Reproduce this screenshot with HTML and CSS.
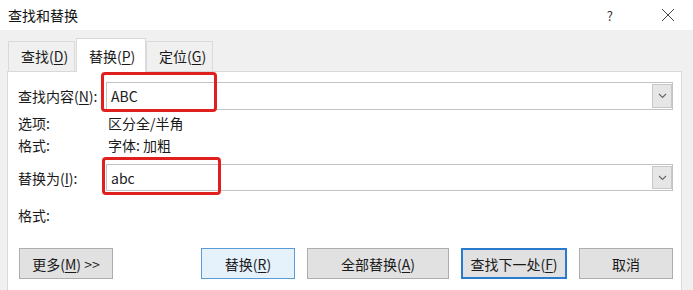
FILE: index.html
```html
<!DOCTYPE html>
<html lang="zh-CN">
<head>
  <meta charset="UTF-8">
  <title>查找和替换</title>
  <link rel="stylesheet" href="styles.css">
</head>
<body>

<div class="dialog">
  <div class="titlebar">
    <span class="title">查找和替换</span>
    <span class="help">?</span>
    <svg class="close" width="14" height="14" viewBox="0 0 14 14">
      <path d="M1 1 L13 13 M13 1 L1 13" stroke="#444" stroke-width="1" fill="none"/>
    </svg>
  </div>

  <div class="body">
    <div class="tabs">
      <div class="tab">查找(<u>D</u>)</div>
      <div class="tab active">替换(<u>P</u>)</div>
      <div class="tab">定位(<u>G</u>)</div>
    </div>

    <div class="panel">
      <div class="field">
        <label>查找内容(<u>N</u>):</label>
        <div class="combo">
          <span class="value">ABC</span>
          <span class="drop"><svg width="9" height="6" viewBox="0 0 9 6"><path d="M1 1 L4.5 4.5 L8 1" stroke="#666" stroke-width="1.1" fill="none"/></svg></span>
          <div class="mark mark-find"></div>
        </div>
      </div>
      <div class="info first"><span class="key">选项:</span><span>区分全/半角</span></div>
      <div class="info"><span class="key">格式:</span><span>字体: 加粗</span></div>

      <div class="field second">
        <label>替换为(<u>I</u>):</label>
        <div class="combo">
          <span class="value">abc</span>
          <span class="drop"><svg width="9" height="6" viewBox="0 0 9 6"><path d="M1 1 L4.5 4.5 L8 1" stroke="#666" stroke-width="1.1" fill="none"/></svg></span>
          <div class="mark mark-replace"></div>
        </div>
      </div>
      <div class="info last"><span class="key">格式:</span><span></span></div>

      <div class="buttons">
        <button class="btn more">更多(<u>M</u>) &gt;&gt;</button>
        <div class="actions">
          <button class="btn primary">替换(<u>R</u>)</button>
          <button class="btn wide">全部替换(<u>A</u>)</button>
          <button class="btn focus">查找下一处(<u>F</u>)</button>
          <button class="btn">取消</button>
        </div>
      </div>
    </div>
  </div>
</div>

</body>
</html>
```

FILE: styles.css
```css
* { box-sizing: border-box; }
body {
  margin: 0;
  width: 693px;
  height: 290px;
  overflow: hidden;
  font-family: "Noto Sans CJK SC", "Noto Sans", sans-serif;
  font-size: 14px;
  color: #1a1a1a;
  background: #f0f0f0;
}
u { text-decoration: underline; text-underline-offset: 2px; }

.titlebar {
  height: 30px;
  background: #fff;
  display: flex;
  align-items: center;
  padding-left: 8px;
  position: relative;
}
.title { font-size: 14px; line-height: 20px; color: #111; }
.help {
  margin-left: auto;
  margin-right: 48px;
  font-size: 13px;
  color: #333;
}
.close { margin-right: 18px; }

.body { padding: 8px 11px 0 7px; }

.tabs {
  display: flex;
  align-items: flex-end;
  padding-left: 1px;
  height: 33px;
}
.tab {
  height: 30px;
  line-height: 29px;
  padding: 0 12px;
  width: 67px;
  text-align: center;
  background: #f0f0f0;
  border: 1px solid #dadada;
  border-bottom: none;
  margin-right: 1px;
  white-space: nowrap;
}
.tab.active {
  height: 34px;
  line-height: 35px;
  width: 70px;
  background: #fff;
  border-color: #d9d9d9;
  margin-bottom: -1px;
  position: relative;
  z-index: 1;
  margin-right: 0;
}

.panel {
  background: #fff;
  border: 1px solid #d9d9d9;
  border-bottom: none;
  height: 230px;
  padding: 10px 8px 0 10px;
}

.field {
  display: flex;
  align-items: center;
  height: 28px;
}
.field.second { margin-top: 8px; height: 27px; }
.field label { width: 88px; line-height: 20px; white-space: nowrap; }
.combo {
  flex: 1;
  height: 100%;
  border: 1px solid #c3c3c3;
  display: flex;
  align-items: center;
  position: relative;
  padding-left: 4px;
}
.value { font-size: 14px; flex: 1; }
.drop {
  width: 20px;
  height: calc(100% - 2px);
  margin-right: 0;
  background: #e6e6e6;
  border: 1px solid #c8c8c8;
  display: flex;
  align-items: center;
  justify-content: center;
}

.mark {
  position: absolute;
  border: 3px solid #e0201f;
  border-radius: 4px;
}
.mark-find { left: -6px; top: -11px; width: 116px; height: 40px; }
.mark-replace { left: -5px; top: -8px; width: 119px; height: 38px; }

.info { display: flex; height: 22px; line-height: 22px; }
.info.first { margin-top: 2px; }
.info .key { width: 90px; }
.info.last { margin-top: 13px; }

.buttons {
  display: flex;
  margin-top: 22px;
}
.actions {
  margin-left: auto;
  display: flex;
  gap: 12px;
}
.btn {
  font-family: inherit;
  font-size: 14px;
  color: #1a1a1a;
  height: 31px;
  width: 94px;
  background: #e1e1e1;
  border: 1px solid #adadad;
  padding: 0;
}
.btn.more { margin-left: 1px; }
.btn.primary { background: #e5f1fb; border-color: #5a9bd5; }
.btn.wide { width: 142px; }
.btn.focus { width: 106px; border: 2px solid #2a7bd0; background: #e1e1e1; }
```
